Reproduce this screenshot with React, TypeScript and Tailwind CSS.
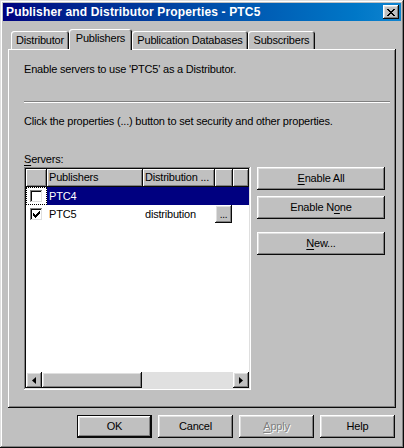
import React from 'react';

// Classic Windows 98 look: bevels are drawn with inset box-shadows.
const raised =
  'shadow-[inset_-1px_-1px_0_#0a0a0a,inset_1px_1px_0_#ffffff,inset_-2px_-2px_0_#808080,inset_2px_2px_0_#dfdfdf]';
const sunken =
  'shadow-[inset_-1px_-1px_0_#ffffff,inset_1px_1px_0_#808080,inset_-2px_-2px_0_#dfdfdf,inset_2px_2px_0_#0a0a0a]';
const thin = 'shadow-[inset_-1px_-1px_0_#0a0a0a,inset_1px_1px_0_#ffffff,inset_-2px_-2px_0_#808080]';

const font = { fontFamily: '"Liberation Sans", Arial, sans-serif' };

interface BtnProps {
  children: React.ReactNode;
  className?: string;
  isDefault?: boolean;
  disabled?: boolean;
}

function Btn({ children, className = '', isDefault, disabled }: BtnProps) {
  const bevel = isDefault
    ? 'shadow-[inset_-1px_-1px_0_#0a0a0a,inset_1px_1px_0_#0a0a0a,inset_-2px_-2px_0_#0a0a0a,inset_2px_2px_0_#ffffff,inset_-3px_-3px_0_#808080,inset_3px_3px_0_#dfdfdf]'
    : raised;
  return (
    <button
      className={`flex items-center justify-center bg-[#c0c0c0] text-[11px] leading-[13px] tracking-[-0.2px] ${bevel} ${
        disabled ? 'text-[#808080] [text-shadow:1px_1px_0_#ffffff]' : 'text-black'
      } ${className}`}
    >
      {children}
    </button>
  );
}

function Key({ children }: { children: React.ReactNode }) {
  return <span className="underline underline-offset-[2px]">{children}</span>;
}

function Tab({ label, active, w }: { label: string; active?: boolean; w: string }) {
  return (
    <div
      className={`flex justify-center rounded-t-[3px] bg-[#c0c0c0] text-[11px] leading-[13px] text-black shadow-[inset_1px_1px_0_#ffffff,inset_-1px_0_0_#0a0a0a,inset_-2px_0_0_#808080] ${w} ${
        active ? 'relative z-10 -mb-px h-[21px] pt-[3px]' : 'h-[18px] pt-[3px]'
      }`}
    >
      {label}
    </div>
  );
}

function Checkbox({ checked }: { checked?: boolean }) {
  return (
    <div className={`flex h-[13px] w-[13px] items-center justify-center bg-white ${sunken}`}>
      {checked && (
        <svg width="7" height="7" viewBox="0 0 7 7">
          <path d="M0 2h1v1h1v1h1v-1h1v-1h1v-1h1v-1h1v3h-1v1h-1v1h-1v1h-1v1h-1v-1h-1v-1h-1z" fill="#000" />
        </svg>
      )}
    </div>
  );
}

function Arrow({ dir }: { dir: 'left' | 'right' }) {
  return (
    <div className={`flex h-[16px] w-[16px] items-center justify-center bg-[#c0c0c0] ${raised}`}>
      <svg width="4" height="7" viewBox="0 0 4 7">
        {dir === 'left' ? <path d="M4 0v7L0 3.5z" fill="#000" /> : <path d="M0 0v7l4-3.5z" fill="#000" />}
      </svg>
    </div>
  );
}

export default function App() {
  return (
    <div
      style={font}
      className="flex h-[448px] w-[404px] flex-col bg-[#c0c0c0] p-[3px] shadow-[inset_-1px_-1px_0_#0a0a0a,inset_1px_1px_0_#dfdfdf,inset_-2px_-2px_0_#808080,inset_2px_2px_0_#ffffff]"
    >
      {/* Title bar */}
      <div className="flex h-[18px] items-center justify-between bg-gradient-to-r from-[#000080] to-[#1084d0] pl-[3px] pr-[2px]">
        <span className="text-[12px] font-bold leading-[14px] tracking-[0.15px] text-white">
          Publisher and Distributor Properties - PTC5
        </span>
        <div className={`flex h-[14px] w-[16px] items-center justify-center bg-[#c0c0c0] ${raised}`}>
          <svg width="8" height="7" viewBox="0 0 8 7">
            <path
              d="M0 0h2v1h1v1h2v-1h1v-1h2v1h-1v1h-1v1h-1v1h1v1h1v1h1v1h-2v-1h-1v-1h-2v1h-1v1h-2v-1h1v-1h1v-1h1v-1h-1v-1h-1v-1h-1z"
              fill="#000"
            />
          </svg>
        </div>
      </div>

      {/* Tabs */}
      <div className="mt-[8px] flex items-end pl-[8px] tracking-[-0.2px]">
        <Tab label="Distributor" w="w-[58px]" />
        <Tab label="Publishers" w="w-[63px]" active />
        <Tab label="Publication Databases" w="w-[116px]" />
        <Tab label="Subscribers" w="w-[67px]" />
      </div>

      {/* Tab panel */}
      <div
        className={`ml-[5px] flex h-[359px] w-[388px] flex-col px-[16px] pt-[14px] text-[11px] leading-[13px] tracking-[-0.2px] text-black shadow-[inset_-1px_-1px_0_#0a0a0a,inset_1px_1px_0_#ffffff,inset_-2px_-2px_0_#808080]`}
      >
        <p>Enable servers to use 'PTC5' as a Distributor.</p>
        <div className="mt-[25px] h-[2px] w-[366px] border-t border-b border-t-[#808080] border-b-white" />
        <p className="mt-[12px]">Click the properties (...) button to set security and other properties.</p>
        <p className="mt-[25px]">
          <Key>S</Key>ervers:
        </p>

        <div className="mt-[1px] flex gap-[6px]">
          {/* List view */}
          <div className={`flex h-[223px] w-[227px] flex-col bg-white p-[2px] ${sunken}`}>
            <div className="flex h-[18px]">
              <div className={`w-[21px] bg-[#c0c0c0] ${thin}`} />
              <div className={`w-[96px] bg-[#c0c0c0] pl-[2px] pt-[2px] ${thin}`}>Publishers</div>
              <div className={`w-[72px] bg-[#c0c0c0] pl-[2px] pt-[2px] ${thin}`}>Distribution ...</div>
              <div className={`w-[18px] bg-[#c0c0c0] ${thin}`} />
              <div className={`w-[16px] bg-[#c0c0c0] ${thin}`} />
            </div>
            <div className="flex h-[18px]">
              <div className="flex w-[21px] items-center justify-center border border-dotted border-black">
                <Checkbox />
              </div>
              <div className="flex flex-1 items-center bg-[#000080] pl-[2px] text-white">PTC4</div>
            </div>
            <div className="flex h-[18px]">
              <div className="flex w-[21px] items-center justify-center">
                <Checkbox checked />
              </div>
              <div className="flex w-[96px] items-center pl-[2px]">PTC5</div>
              <div className="flex w-[72px] items-center pl-[2px]">distribution</div>
              <div className={`flex h-[18px] w-[17px] items-end justify-center bg-[#c0c0c0] pb-[3px] text-[10px] leading-[10px] ${raised}`}>
                ...
              </div>
            </div>
            <div className="flex-1" />
            <div className="flex h-[16px]">
              <Arrow dir="left" />
              <div className={`h-[16px] w-[100px] bg-[#c0c0c0] ${raised}`} />
              <div className="h-[16px] flex-1 bg-[#e0e0e0]" />
              <Arrow dir="right" />
            </div>
          </div>

          {/* Side buttons */}
          <div className="flex flex-col">
            <Btn className="h-[23px] w-[128px]">
              <Key>E</Key>nable All
            </Btn>
            <Btn className="mt-[6px] h-[23px] w-[128px]">
              Enable N<Key>o</Key>ne
            </Btn>
            <Btn className="mt-[13px] h-[23px] w-[128px]">
              <Key>N</Key>ew...
            </Btn>
          </div>
        </div>
      </div>

      {/* Dialog buttons */}
      <div className="mt-[7px] flex justify-end gap-[6px] pr-[6px]">
        <Btn className="h-[23px] w-[75px]" isDefault>
          OK
        </Btn>
        <Btn className="h-[23px] w-[75px]">Cancel</Btn>
        <Btn className="h-[23px] w-[75px]" disabled>
          <Key>A</Key>pply
        </Btn>
        <Btn className="h-[23px] w-[75px]">Help</Btn>
      </div>
    </div>
  );
}
